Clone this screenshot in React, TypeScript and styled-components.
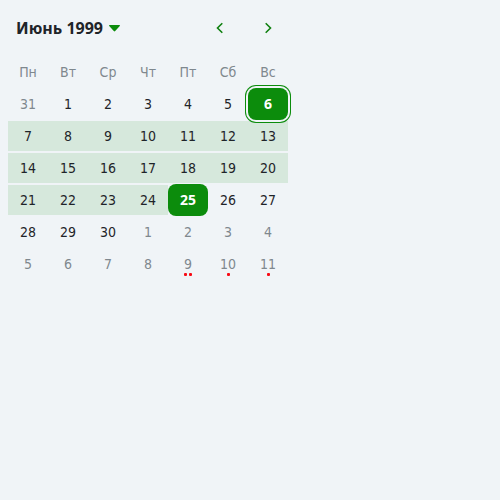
import React, { useState } from 'react';
import styled, { createGlobalStyle, css } from 'styled-components';

const GlobalStyle = createGlobalStyle`
  *, *::before, *::after { box-sizing: border-box; }
  body {
    margin: 0;
    background: #f0f4f7;
    color: #1f2429;
    font-family: "DejaVu Sans Condensed", "Noto Sans", sans-serif;
  }
`;

const Page = styled.main`
  padding: 8px;
`;

const Calendar = styled.section`
  max-width: 280px;
`;

const Header = styled.header`
  display: flex;
  align-items: center;
  justify-content: space-between;
  height: 40px;
  padding-left: 8px;
`;

const BareButton = styled.button`
  display: flex;
  align-items: center;
  padding: 0;
  border: 0;
  background: none;
  font: inherit;
  color: #108010;
  cursor: pointer;
`;

const PeriodButton = styled(BareButton)`
  gap: 6px;
`;

const PeriodTitle = styled.span`
  color: #1f2429;
  font-family: "Noto Sans", sans-serif;
  font-size: 16px;
  line-height: 24px;
  font-weight: 700;
`;

const Arrows = styled.div`
  display: flex;
  gap: 8px;
`;

const ArrowButton = styled(BareButton)`
  justify-content: center;
  width: 40px;
  height: 40px;
`;

const Grid = styled.table`
  width: 100%;
  margin-top: 8px;
  border-collapse: collapse;
  table-layout: fixed;
  font-size: 14px;
  line-height: 20px;
`;

const WeekDay = styled.th`
  height: 32px;
  padding: 0;
  color: #7f888e;
  font-weight: 400;
`;

const Cell = styled.td<{ $inRange: boolean }>`
  height: 32px;
  padding: 0;
  background: ${(p) =>
    p.$inRange
      ? 'linear-gradient(#d6e8dc, #d6e8dc) center / 100% calc(100% - 2px) no-repeat'
      : 'none'};
`;

const DayButton = styled.button<{ $muted: boolean; $selected: boolean; $focused: boolean }>`
  position: relative;
  display: flex;
  align-items: center;
  justify-content: center;
  width: 100%;
  height: 32px;
  padding: 0;
  border: 0;
  border-radius: 8px;
  outline: none;
  background: none;
  color: ${(p) => (p.$muted ? '#7f888e' : '#1f2429')};
  font: inherit;
  cursor: pointer;

  ${(p) =>
    p.$selected &&
    css`
      background: #0c8c0c;
      color: #ffffff;
      font-family: "Noto Sans", sans-serif;
      font-weight: 700;
    `}

  ${(p) =>
    p.$focused &&
    css`
      z-index: 1;
      box-shadow: 0 0 0 2px #f0f4f7, 0 0 0 3px #0c8c0c;
    `}
`;

const Events = styled.span`
  position: absolute;
  left: 0;
  right: 0;
  bottom: 4px;
  display: flex;
  justify-content: center;
  gap: 2px;
`;

const Dot = styled.i`
  width: 3px;
  height: 3px;
  border-radius: 1px;
  background: #f80a14;
`;

const weekDays = ['Пн', 'Вт', 'Ср', 'Чт', 'Пт', 'Сб', 'Вс'];
const rangeStart = 6;
const rangeEnd = 25;
const events: Record<number, number> = { 39: 2, 40: 1, 41: 1 };

const weeks = Array.from({ length: 6 }, (_, week) =>
  Array.from({ length: 7 }, (_, day) => week * 7 + day),
);

const label = (offset: number) => new Date(1999, 5, offset).getDate();

export default function App() {
  const [focused, setFocused] = useState(rangeStart);

  return (
    <>
      <GlobalStyle />
      <Page>
        <Calendar aria-label="Календарь">
          <Header>
            <PeriodButton type="button">
              <PeriodTitle>Июнь 1999</PeriodTitle>
              <svg width="11" height="7" viewBox="0 0 11 7" aria-hidden="true">
                <path
                  d="M.7 0h9.6c.6 0 .9.7.5 1.1L6.2 6.1a1 1 0 0 1-1.4 0L.2 1.1C-.2.7.1 0 .7 0Z"
                  fill="#0c8c0c"
                />
              </svg>
            </PeriodButton>
            <Arrows>
              <ArrowButton type="button" aria-label="Предыдущий месяц">
                <svg width="16" height="16" viewBox="0 0 16 16" fill="none" aria-hidden="true">
                  <path d="M10.3 3.2 5.5 8l4.8 4.8" stroke="currentColor" strokeWidth="1.6" />
                </svg>
              </ArrowButton>
              <ArrowButton type="button" aria-label="Следующий месяц">
                <svg width="16" height="16" viewBox="0 0 16 16" fill="none" aria-hidden="true">
                  <path d="M5.7 3.2 10.5 8l-4.8 4.8" stroke="currentColor" strokeWidth="1.6" />
                </svg>
              </ArrowButton>
            </Arrows>
          </Header>
          <Grid>
            <thead>
              <tr>
                {weekDays.map((name) => (
                  <WeekDay key={name} scope="col">{name}</WeekDay>
                ))}
              </tr>
            </thead>
            <tbody>
              {weeks.map((week) => (
                <tr key={week[0]}>
                  {week.map((day) => (
                    <Cell key={day} $inRange={day > rangeStart && day < rangeEnd}>
                      <DayButton
                        type="button"
                        $muted={day < 1 || day > 30}
                        $selected={day === rangeStart || day === rangeEnd}
                        $focused={day === focused}
                        onFocus={() => setFocused(day)}
                      >
                        {label(day)}
                        {events[day] && (
                          <Events>
                            {Array.from({ length: events[day] }, (_, i) => <Dot key={i} />)}
                          </Events>
                        )}
                      </DayButton>
                    </Cell>
                  ))}
                </tr>
              ))}
            </tbody>
          </Grid>
        </Calendar>
      </Page>
    </>
  );
}
